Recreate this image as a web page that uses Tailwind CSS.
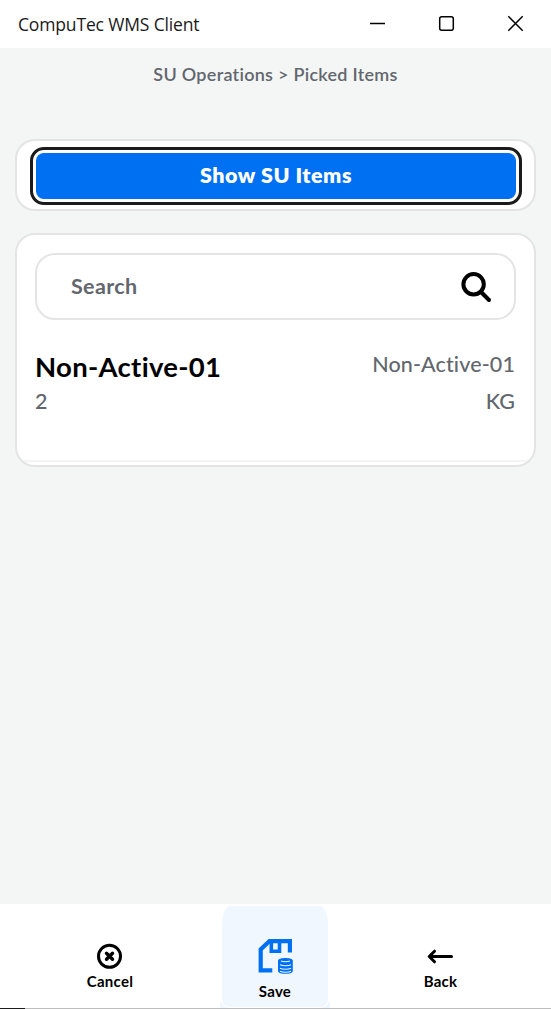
<!DOCTYPE html>
<html lang="en">
<head>
<meta charset="utf-8">
<title>CompuTec WMS Client</title>
<script src="https://cdn.jsdelivr.net/npm/@tailwindcss/browser@4"></script>
</head>
<body class="flex h-[1009px] w-[551px] flex-col overflow-hidden bg-[#f4f6f6] font-['Lato',sans-serif] text-black [font-variant-ligatures:none]">
<header class="flex h-12 shrink-0 items-center justify-between bg-white pl-[18px]">
  <h1 class="font-['Open_Sans',sans-serif] text-[17.5px] leading-6 tracking-[-0.15px] whitespace-nowrap text-[#1a1a1a]">CompuTec WMS Client</h1>
  <svg class="h-12 w-[208px]" viewBox="343 0 208 48" fill="none" stroke="#000" stroke-width="1.5">
    <path d="M370 23.5h15"/><rect x="439.7" y="16.7" width="13.6" height="13.6" rx="2"/><path d="M508.3 16.3l14.4 14.4M522.7 16.3l-14.4 14.4"/>
  </svg>
</header>
<main class="flex grow flex-col px-[15px]">
  <p class="mt-[14px] text-center text-[18px] leading-6 font-semibold tracking-[0.27px] text-[#62666d]">SU Operations &gt; Picked Items</p>
  <section class="mt-[53px] h-[72px] rounded-[20px] border-2 border-[#e4e4e4] bg-white px-[19px] pt-3">
    <button class="block h-[46px] w-[480px] rounded-lg bg-[#0070f3] pb-px text-[21.5px] leading-[43px] font-extrabold tracking-[0.5px] text-white outline-3 outline-offset-[3.5px] outline-[#1b1b1b]">Show SU Items</button>
  </section>
  <section class="mt-[22px] h-[234px] overflow-hidden rounded-[20px] border-2 border-[#e4e4e4] bg-white">
    <div class="mx-[18px] mt-[18px] flex h-[67px] items-center justify-between rounded-[20px] border-2 border-[#e4e4e4] pr-[22px] pl-[34px]">
      <span class="pb-px text-[21.5px] font-bold tracking-[0.35px] text-[#62666d]">Search</span>
      <svg class="size-8" viewBox="460 271 32 32" fill="none" stroke="#000" stroke-width="4" stroke-linecap="round"><circle cx="473.6" cy="284.3" r="10.2"/><path d="M481 292l8 8"/></svg>
    </div>
    <div class="mt-[29px] flex h-[37px] justify-between pr-[19px] pl-[18px]">
      <span class="text-[27.5px] leading-9 font-bold tracking-[0.3px]">Non-Active-01</span>
      <span class="text-[21.5px] leading-[30px] font-medium tracking-[0.12px] text-[#62666d]">Non-Active-01</span>
    </div>
    <div class="flex h-[76px] justify-between border-b-2 border-[#f4f4f4] pr-[19px] pl-[18px] text-[21.5px] leading-[30px] font-medium text-[#62666d]"><span>2</span><span>KG</span></div>
  </section>
</main>
<footer class="flex h-[105px] shrink-0 flex-col bg-white text-[15px] font-bold">
  <nav class="flex h-[104px] justify-center">
    <div class="flex w-[220px] flex-col items-center pt-[38px]">
      <svg class="size-7" viewBox="0 0 28 28" fill="none" stroke="#000" stroke-width="3" stroke-linecap="round"><circle cx="13.5" cy="14.3" r="11"/><path stroke-width="3.4" d="M10.500 11.300l6 6M16.500 11.300l-6 6"/></svg>
      <span class="leading-[22px] tracking-[0.25px]">Cancel</span>
    </div>
    <div class="flex h-[104px] w-[110px] justify-center bg-linear-to-b from-white from-[97px] to-[#f0f7ff] to-[97px]">
      <div class="flex h-[104px] w-[110px] flex-col rounded-b-[10px] bg-white px-[2px] pt-[2px]">
        <div class="flex h-[101px] w-[106px] flex-col items-center rounded-t-[8px_18px] rounded-b-lg bg-[#f0f7ff] pt-[32px]">
          <svg class="h-[38px] w-[36px] shrink-0" viewBox="257 938 36 38" fill="none" stroke="#0070f3">
            <path stroke-width="4.200" d="M272.300 970.300H260.700V949.500L269.500 941.100H289.900V952.500"/>
            <path stroke-width="3.600" d="M271.300 940v11.200h8.200V940"/>
            <path fill="#0070f3" stroke="none" d="M278 960.500c0-3.400 14.800-3.400 14.800 0v10.800c0 3.400-14.800 3.400-14.800 0z"/>
            <path stroke="#f0f7ff" stroke-width="1.100" d="M281 961c2 1 7 1 9 0M280 964.800c2.500 1.200 8.500 1.200 11 0M280 968.300c2.500 1.200 8.500 1.200 11 0M280 971.300c2.500 1.200 8.500 1.200 11 0"/>
          </svg>
          <span class="mt-[3px] leading-6 tracking-[0.25px]">Save</span>
        </div>
      </div>
    </div>
    <div class="flex w-[221px] flex-col items-center pt-[38px]">
      <svg class="size-7" viewBox="0 0 28 28" fill="none" stroke="#000" stroke-width="3" stroke-linecap="round" stroke-linejoin="round"><path d="M24.500 14.500H2.500M7.500 9.200L2.200 14.500L7.500 19.800"/></svg>
      <span class="leading-[22px] tracking-[0.25px]">Back</span>
    </div>
  </nav>
  <div class="flex h-px bg-[#bdbdbd]"><span class="w-[25px] bg-[#1b1b1b]"></span></div>
</footer>
</body>
</html>
